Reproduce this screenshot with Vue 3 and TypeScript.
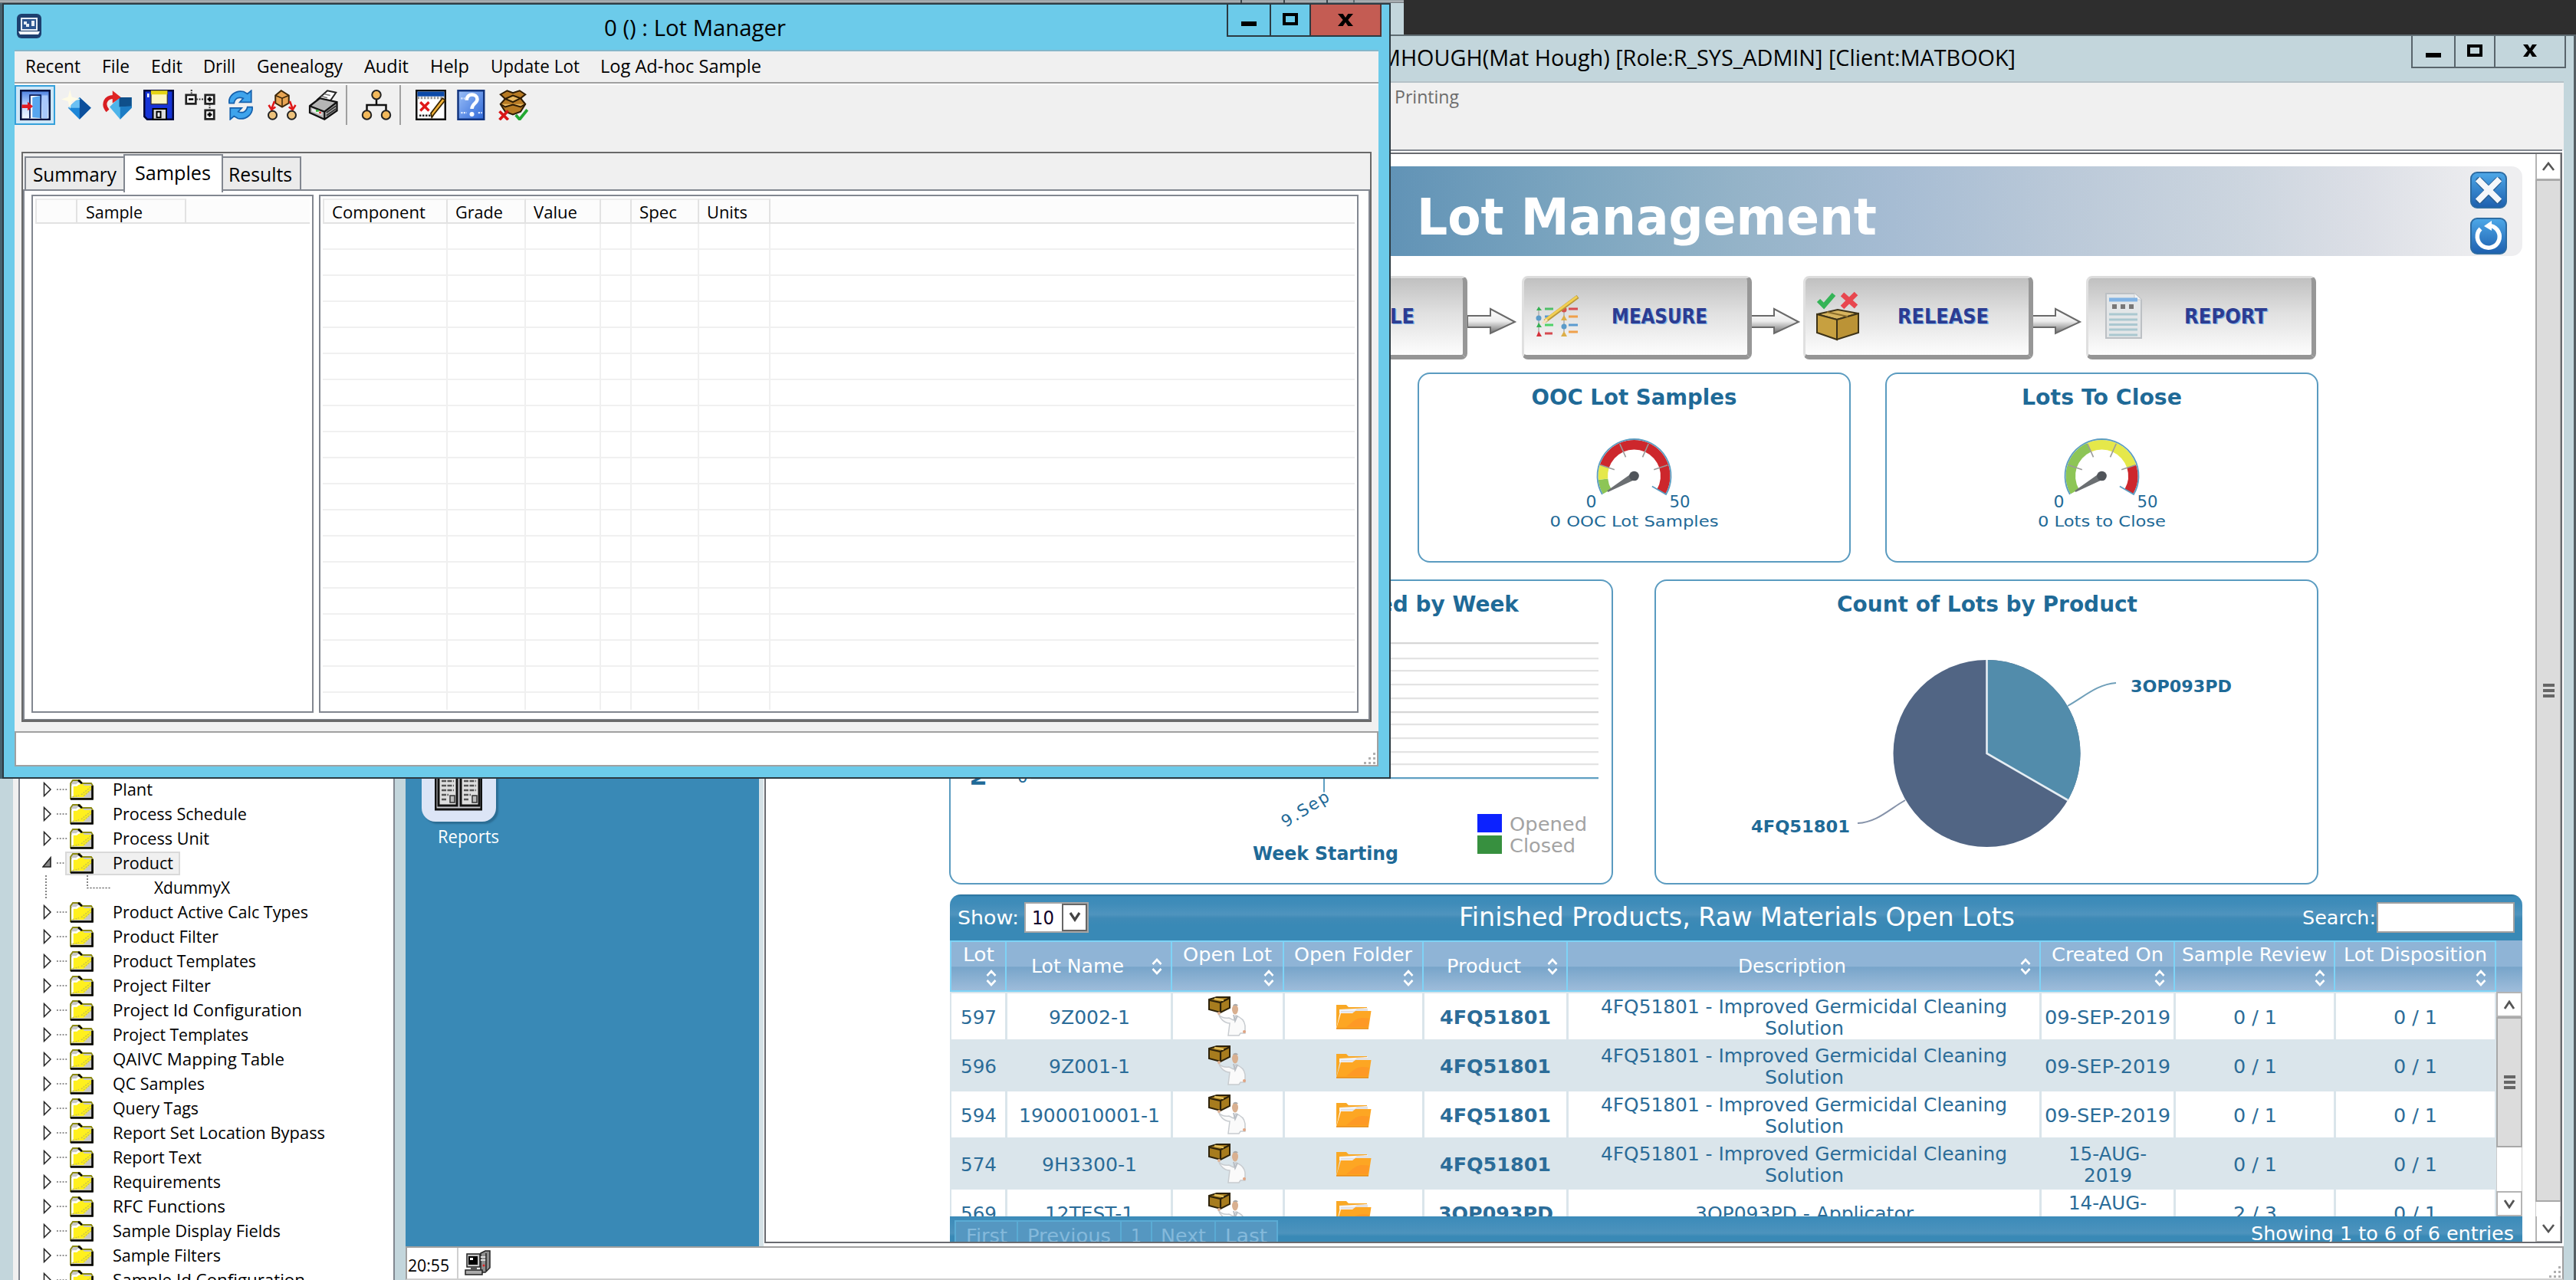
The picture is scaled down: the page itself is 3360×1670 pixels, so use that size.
<script setup lang="ts">
interface Sized { text: string; w: number }
interface MenuEntry extends Sized { slot: number }
interface TreeNode extends Sized { child?: boolean; open?: boolean }
interface LotRow {
  lot: string; name: string; nameW: number; product: string; productW: number
  desc: Sized[]; date: Sized[]; review: string; disposition: string
}

// Squeezes or stretches a label horizontally to the given width in pixels.
const vFit = {
  mounted(el: HTMLElement, binding: { value: number }) {
    const natural = el.getBoundingClientRect().width
    if (!natural) return
    el.style.transform = `scaleX(${binding.value / natural})`
    el.style.marginRight = `${binding.value - natural}px`
  },
}

const menu: MenuEntry[] = [
  { text: 'Recent', w: 72, slot: 100 },
  { text: 'File', w: 36, slot: 64 },
  { text: 'Edit', w: 41, slot: 68 },
  { text: 'Drill', w: 42, slot: 70 },
  { text: 'Genealogy', w: 112, slot: 140 },
  { text: 'Audit', w: 58, slot: 86 },
  { text: 'Help', w: 51, slot: 79 },
  { text: 'Update Lot', w: 116, slot: 143 },
  { text: 'Log Ad-hoc Sample', w: 210, slot: 220 },
]

const columns = [
  { text: 'Component', w: 122, slot: 161 },
  { text: 'Grade', w: 62, slot: 102 },
  { text: 'Value', w: 57, slot: 98 },
  { text: '', w: 0, slot: 40 },
  { text: 'Spec', w: 49, slot: 88 },
  { text: 'Units', w: 53, slot: 93 },
]

const tree: TreeNode[] = [
  { text: 'Plant', w: 52 },
  { text: 'Process Schedule', w: 175 },
  { text: 'Process Unit', w: 126 },
  { text: 'Product', w: 79, open: true },
  { text: 'XdummyX', w: 99, child: true },
  { text: 'Product Active Calc Types', w: 255 },
  { text: 'Product Filter', w: 138 },
  { text: 'Product Templates', w: 187 },
  { text: 'Project Filter', w: 128 },
  { text: 'Project Id Configuration', w: 247 },
  { text: 'Project Templates', w: 177 },
  { text: 'QAIVC Mapping Table', w: 224 },
  { text: 'QC Samples', w: 120 },
  { text: 'Query Tags', w: 112 },
  { text: 'Report Set Location Bypass', w: 277 },
  { text: 'Report Text', w: 116 },
  { text: 'Requirements', w: 141 },
  { text: 'RFC Functions', w: 147 },
  { text: 'Sample Display Fields', w: 219 },
  { text: 'Sample Filters', w: 141 },
  { text: 'Sample Id Configuration', w: 251 },
]

const heads = [
  { text: 'Lot', w: 41, tall: true },
  { text: 'Lot Name', w: 121, tall: false },
  { text: 'Open Lot', w: 116, tall: true },
  { text: 'Open Folder', w: 154, tall: true },
  { text: 'Product', w: 97, tall: false },
  { text: 'Description', w: 141, tall: false },
  { text: 'Created On', w: 146, tall: true },
  { text: 'Sample Review', w: 189, tall: true },
  { text: 'Lot Disposition', w: 187, tall: true },
]

const germ: Sized[] = [
  { text: '4FQ51801 - Improved Germicidal Cleaning', w: 530 },
  { text: 'Solution', w: 103 },
]
const sep: Sized[] = [{ text: '09-SEP-2019', w: 164 }]
const rows: LotRow[] = [
  { lot: '597', name: '9Z002-1', nameW: 106, product: '4FQ51801', productW: 145, desc: germ, date: sep, review: '0 / 1', disposition: '0 / 1' },
  { lot: '596', name: '9Z001-1', nameW: 106, product: '4FQ51801', productW: 145, desc: germ, date: sep, review: '0 / 1', disposition: '0 / 1' },
  { lot: '594', name: '1900010001-1', nameW: 184, product: '4FQ51801', productW: 145, desc: germ, date: sep, review: '0 / 1', disposition: '0 / 1' },
  { lot: '574', name: '9H3300-1', nameW: 124, product: '4FQ51801', productW: 145, desc: germ, date: [{ text: '15-AUG-', w: 102 }, { text: '2019', w: 63 }], review: '0 / 1', disposition: '0 / 1' },
  { lot: '569', name: '12TEST-1', nameW: 116, product: '3OP093PD', productW: 150, desc: [{ text: '3OP093PD - Applicator', w: 285 }], date: [{ text: '14-AUG-', w: 102 }, { text: '2019', w: 63 }], review: '2 / 3', disposition: '0 / 1' },
]

const pager = [
  { text: 'First', w: 54, slot: 81 },
  { text: 'Previous', w: 109, slot: 135 },
  { text: '1', w: 14, slot: 40 },
  { text: 'Next', w: 59, slot: 83 },
  { text: 'Last', w: 55, slot: 81 },
]

const gridLines = [838, 858, 874, 892, 910, 928, 944, 962, 980, 996]

// Gauges sweep 240 degrees, starting 30 degrees below the horizontal on the left.
const point = (cx: number, cy: number, r: number, deg: number): string => {
  const a = ((150 + deg) * Math.PI) / 180
  return `${(cx + r * Math.cos(a)).toFixed(2)} ${(cy + r * Math.sin(a)).toFixed(2)}`
}
const band = (cx: number, cy: number, from: number, to: number): string => {
  const large = to - from > 180 ? 1 : 0
  return `M${point(cx, cy, 47, from)}A47 47 0 ${large} 1 ${point(cx, cy, 47, to)}L${point(cx, cy, 34.5, to)}A34.5 34.5 0 ${large} 0 ${point(cx, cy, 34.5, from)}Z`
}
const gauges = [
  { id: 'ooc', view: '1849 486 565 248', title: 'OOC Lot Samples', titleW: 268, cx: 2131.5, caption: '0 OOC Lot Samples', captionW: 220, green: 24, yellow: 48 },
  { id: 'close', view: '2459 486 565 248', title: 'Lots To Close', titleW: 209, cx: 2741.5, caption: '0 Lots to Close', captionW: 167, green: 96, yellow: 192 },
]
const GY = 621
</script>

<template>
  <div class="desktop">
    <!-- window peeking out at the very top -->
    <div class="peek"><i class="p1" /><i class="p2" /><i class="p3" /></div>

    <!-- main application window -->
    <section class="main-win">
      <header class="main-title">
        <span class="caption"><span v-fit="828" class="t seg f29">MHOUGH(Mat Hough) [Role:R_SYS_ADMIN] [Client:MATBOOK]</span></span>
        <div class="win-btns pale">
          <span class="wb a"><i class="g-min" /></span><span class="wb b"><i class="g-max" /></span>
          <span class="wb c"><svg width="18" height="16" viewBox="0 0 18 16"><path d="M0 0h6l3 5 3-5h6l-6 8 6 8h-6l-3-5-3 5H0l6-8z" /></svg></span>
        </div>
      </header>
      <div class="main-menu"><span v-fit="84" class="t seg f24">Printing</span></div>
      <div class="main-body">
        <aside class="tree">
          <div v-for="n in tree" :key="n.text" class="node" :class="{ child: n.child, open: n.open }">
            <svg v-if="!n.child" class="twist" width="34" height="32" viewBox="0 0 34 32">
              <path v-if="!n.open" d="M2.5 7.5v17L11 16z" fill="#fff" stroke="#222" stroke-width="1.5" />
              <path v-else d="M11 9v12H1z" fill="#888" stroke="#222" stroke-width="1.6" />
              <path d="M19 16h15" stroke="#666" stroke-width="1.6" stroke-dasharray="1.8 2" />
            </svg>
            <svg v-else class="elbow" width="90" height="32" viewBox="0 0 90 32">
              <path d="M5 0v32M59 0v16.500h30" fill="none" stroke="#666" stroke-width="1.6" stroke-dasharray="2 2" />
            </svg>
            <span class="node-box">
              <svg v-if="!n.child" class="folder" width="32" height="28" viewBox="0 0 32 28">
                <path d="M2 26V6l3-4h9l3 4h12l2 3v17z" fill="#c8c8c8" stroke="#8b8a12" stroke-width="1.8" />
                <path d="M4 24V10h4V7h10l2 2h9v5L19 24z" fill="#fff01e" />
                <path d="M4 8.500h6l2-2h2M4.500 23V9" stroke="#fff" stroke-width="2.500" fill="none" />
                <path d="M5 23.500c3 0 6-1 8-2M16 21l12-10M19 22l10-8" stroke="#c9c44a" stroke-width="1.600" stroke-dasharray="2 1.500" fill="none" />
                <path d="M2 26.500h28.500V9M12 2l5 4" stroke="#000" stroke-width="2.600" fill="none" />
              </svg>
              <span v-fit="n.w" class="t seg f21">{{ n.text }}</span>
            </span>
          </div>
        </aside>
        <div class="split" />
        <div class="right">
          <div class="upper">
            <nav class="nav">
              <div class="tile">
                <svg width="62" height="70" viewBox="0 0 62 70">
                  <path d="M1 0h60v68H1z" fill="#c9c9cf" stroke="#111" stroke-width="3" />
                  <g v-for="x in [5, 34]" :key="x" :transform="`translate(${x} 0)`">
                    <path d="M0 -5h24v68H0z" fill="#dedede" stroke="#111" stroke-width="3" />
                    <path d="M4 20h4" stroke="#0b4bd8" stroke-width="5" />
                    <path d="M10 21h10" stroke="#1f74ff" stroke-width="3" stroke-dasharray="2.500 1.500" />
                    <path d="M4 31h16M4 37h16M4 43h16M4 49h9M4 55h7" stroke="#555" stroke-width="2.600" stroke-dasharray="6 1.500" />
                    <path d="M15 50h6v9h-6z" fill="#bbb" stroke="#333" stroke-width="1.500" />
                  </g>
                </svg>
              </div>
              <span v-fit="80" class="t seg f23 white">Reports</span>
            </nav>
            <div class="gutter" />
            <div class="frame">
              <div class="page">
                <div class="banner">
                  <span v-fit="600" class="t dj h1">Lot Management</span>
                  <div class="banner-btns">
                    <svg width="48" height="48" viewBox="0 0 48 48">
                      <defs><linearGradient id="bb" x1="0" y1="0" x2="0" y2="1"><stop offset="0" stop-color="#4ea8e8" /><stop offset="1" stop-color="#1d5fae" /></linearGradient></defs>
                      <rect x="1" y="1" width="46" height="46" rx="8" fill="url(#bb)" stroke="#2d6ca3" stroke-width="2" />
                      <path d="M12 12l24 25M36 12L12 37" stroke="#2a5f94" stroke-width="10" stroke-linecap="round" />
                      <path d="M12.500 12.500l23 23M35.500 12.500l-23 23" stroke="#f4f7fb" stroke-width="8" stroke-linecap="square" />
                    </svg>
                    <svg width="48" height="48" viewBox="0 0 48 48">
                      <rect x="1" y="1" width="46" height="46" rx="8" fill="url(#bb)" stroke="#2d6ca3" stroke-width="2" />
                      <path d="M13.500 14.500A14.500 14.500 0 1 0 27 10.600" fill="none" stroke="#fff" stroke-width="5.500" />
                      <path d="M28 4v13l-10-6z" fill="#fff" />
                    </svg>
                  </div>
                </div>

                <div class="flow">
                  <div class="step"><span v-fit="110" class="t dj step-l s0">SAMPLE</span></div>
                  <svg class="arrow" width="71" height="40" viewBox="-1 0 71 40"><defs><linearGradient id="ar" x1="0" y1="0" x2="0" y2="1"><stop offset="0" stop-color="#fff" /><stop offset=".5" stop-color="#ececec" /><stop offset="1" stop-color="#6c6c6c" /></linearGradient></defs><path d="M-1 13h30V4l32 17-32 15v-8H-1z" fill="url(#ar)" stroke="#6a6a6a" stroke-width="2" /></svg>
                  <div class="step">
                    <svg class="ico" width="62" height="62" viewBox="0 0 62 62">
                      <path d="M15 21h11" stroke="#4fbf68" stroke-width="3" /><path d="M46 21h12M15 53h10" stroke="#d64a50" stroke-width="3" /><path d="M15 31h8M46 42h12" stroke="#5b9bd0" stroke-width="3" /><path d="M46 31h12M46 51h12" stroke="#efa04b" stroke-width="3" /><path d="M15 42h11" stroke="#4fd268" stroke-width="3" />
                      <path d="M7 21v30M40 21v30" stroke="#bbb" stroke-width="2" />
                      <path d="M4 23l3-5 4 5zM4 45l3-6 4 6z" fill="#36b052" /><circle cx="7" cy="33" r="3.500" fill="#5b9bc9" /><path d="M4 57l3-7 4 7z" fill="#d5313b" /><circle cx="40" cy="22" r="3.500" fill="#d5514b" /><path d="M36 36l4-7 4 7zM36 57l4-7 4 7z" fill="#dcae48" /><circle cx="40" cy="44" r="3.500" fill="#5b9bc9" />
                      <path d="M15 37L58 5" stroke="#b8973a" stroke-width="5" /><path d="M15 36L57 5" stroke="#f2cf52" stroke-width="3" /><path d="M12 40l6-5" stroke="#f5dfc0" stroke-width="3" />
                    </svg>
                    <span v-fit="125" class="t dj step-l s1">MEASURE</span>
                  </div>
                  <svg class="arrow" width="67" height="40" viewBox="0 0 67 40"><path d="M-1 13h30V4l32 17-32 15v-8H-1z" fill="url(#ar)" stroke="#6a6a6a" stroke-width="2" /></svg>
                  <div class="step">
                    <svg class="ico" width="62" height="66" viewBox="0 0 62 66">
                      <path d="M5 12l7 7L25 4" fill="none" stroke="#35b457" stroke-width="6" /><path d="M36 4l18 16M54 3L36 21" stroke="#e8474f" stroke-width="6.500" />
                      <path d="M3 30l27-6 27 5-28 8z" fill="#d7b45f" stroke="#3d3217" stroke-width="2" /><path d="M3 30l26 7v26L3 54z" fill="#c7a040" stroke="#3d3217" stroke-width="2" /><path d="M29 37l28-8v25L29 63z" fill="#bb9336" stroke="#3d3217" stroke-width="2" /><path d="M16 27l27 6" stroke="#8a6c2a" stroke-width="2" />
                    </svg>
                    <span v-fit="119" class="t dj step-l s2">RELEASE</span>
                  </div>
                  <svg class="arrow" width="69" height="40" viewBox="0 0 69 40"><path d="M-1 13h30V4l32 17-32 15v-8H-1z" fill="url(#ar)" stroke="#6a6a6a" stroke-width="2" /></svg>
                  <div class="step">
                    <svg class="ico r" width="52" height="64" viewBox="0 0 52 64">
                      <path d="M3 2h37l9 8v50H3z" fill="#e3e6e8" stroke="#bcc0c4" stroke-width="2" /><path d="M40 2v8h9" fill="#f6f6f6" stroke="#c6c9cc" />
                      <path d="M7 10h37" stroke="#81b3e4" stroke-width="5" /><path d="M11 19h29" stroke="#777" stroke-width="6" stroke-dasharray="6 5" /><path d="M7 29h37M7 36h37M7 42.500h37M7 49h37M7 56h37" stroke="#abc8d0" stroke-width="3" />
                    </svg>
                    <span v-fit="108" class="t dj step-l s3">REPORT</span>
                  </div>
                </div>

                <div class="cards one">
                  <div v-for="g in gauges" :key="g.id" class="card">
                    <svg width="565" height="248" :viewBox="g.view">
                      <text class="ct" :x="g.cx" y="528" text-anchor="middle" :textLength="g.titleW" lengthAdjust="spacingAndGlyphs">{{ g.title }}</text>
                      <path :d="band(g.cx, GY, 0, g.green)" fill="#8dc556" />
                      <path :d="band(g.cx, GY, g.green, g.yellow)" fill="#e5e84a" />
                      <path :d="band(g.cx, GY, g.yellow, 240)" fill="#cd272c" />
                      <path :d="`M${point(g.cx, GY, 48, 0)}A48 48 0 1 1 ${point(g.cx, GY, 48, 240)}L${point(g.cx, GY, 27, 240)}`" fill="none" stroke="#5b9cc0" stroke-width="1.800" />
                      <path v-for="d in [48, 96, 144, 192]" :key="d" :d="`M${point(g.cx, GY, 46, d)}L${point(g.cx, GY, 27, d)}`" stroke="#9a9a9a" stroke-width="1.600" />
                      <path :d="`M${point(g.cx, GY, 40, 0)}L${point(g.cx, GY, 4, -60)}L${point(g.cx, GY, 4, 60)}Z`" fill="#6b6f72" stroke="#6b6f72" stroke-width="2" />
                      <circle :cx="g.cx" :cy="GY" r="6.300" fill="#50545a" />
                      <text class="gl" :x="g.cx - 63" y="662" textLength="14" lengthAdjust="spacingAndGlyphs">0</text>
                      <text class="gl" :x="g.cx + 46" y="662" textLength="27" lengthAdjust="spacingAndGlyphs">50</text>
                      <text class="gc" :x="g.cx" y="687" text-anchor="middle" :textLength="g.captionW" lengthAdjust="spacingAndGlyphs">{{ g.caption }}</text>
                    </svg>
                  </div>
                </div>

                <div class="cards two">
                  <div class="card">
                    <svg width="866" height="398" viewBox="1238 756 866 398">
                      <text class="ct" x="1981" y="798" text-anchor="end">Lots Opened and Closed by Week</text>
                      <path v-for="(y, i) in gridLines" :key="y" :d="`M1345 ${y}h740v2.200H1345z`" :fill="i % 5 === 0 ? '#d6d6d6' : '#e3e3e3'" />
                      <path d="M1345 1014h740v2.200H1345z" fill="#5f9fc2" /><path d="M1727 1015v18.500" stroke="#5f9fc2" stroke-width="2" />
                      <text class="gl" x="1327" y="1021">0</text>
                      <text class="wb24" transform="translate(1285 1026) rotate(-90)">Number of Lots</text>
                      <text class="gl" transform="translate(1677 1080) rotate(-32)" textLength="69">9.Sep</text>
                      <text class="wb24" x="1634" y="1122" textLength="190" lengthAdjust="spacingAndGlyphs">Week Starting</text>
                      <path d="M1927 1062h32v24h-32z" fill="#0c22ff" /><path d="M1927 1090h32v24h-32z" fill="#37903f" />
                      <text class="lg" x="1969" y="1084" textLength="101" lengthAdjust="spacingAndGlyphs">Opened</text>
                      <text class="lg" x="1969" y="1112" textLength="86" lengthAdjust="spacingAndGlyphs">Closed</text>
                    </svg>
                  </div>
                  <div class="card">
                    <svg width="866" height="398" viewBox="2158 756 866 398">
                      <text class="ct" x="2592" y="798" text-anchor="middle" textLength="392" lengthAdjust="spacingAndGlyphs">Count of Lots by Product</text>
                      <circle cx="2591.500" cy="983" r="122" fill="#516584" />
                      <path d="M2591.500 983V861A122 122 0 0 1 2697.200 1044z" fill="#528cab" />
                      <path d="M2591.500 861v122l105.700 61" fill="none" stroke="#e6eef4" stroke-width="2.600" />
                      <path d="M2697 921C2720 908 2735 893 2760 891" fill="none" stroke="#6f9fb9" stroke-width="2" />
                      <path d="M2485 1044C2464 1056 2448 1073 2423 1074" fill="none" stroke="#8592a9" stroke-width="2" />
                      <text class="pl" x="2779" y="903" textLength="132" lengthAdjust="spacingAndGlyphs">3OP093PD</text>
                      <text class="pl" x="2284" y="1086" textLength="129" lengthAdjust="spacingAndGlyphs">4FQ51801</text>
                    </svg>
                  </div>
                </div>

                <div class="lots">
                  <div class="lots-bar">
                    <span v-fit="80" class="t dj f25">Show:</span>
                    <span class="select"><span v-fit="29" class="t dj f25 ten">10</span><span class="drop"><svg width="16" height="14" viewBox="0 0 16 14"><path d="M2 1l6 9 6-9" fill="none" stroke="#444" stroke-width="3.200" /></svg></span></span>
                    <span class="lots-title"><span v-fit="725" class="t dj f33">Finished Products, Raw Materials Open Lots</span></span>
                    <span v-fit="96" class="t dj f25">Search:</span>
                    <span class="search" />
                  </div>
                  <div class="grid head">
                    <div v-for="h in heads" :key="h.text" class="th" :class="{ tall: h.tall }">
                      <span class="th-l"><span v-fit="h.w" class="t dj f24">{{ h.text }}</span></span>
                      <svg class="sort" width="14" height="22" viewBox="0 0 14 22"><path d="M1.500 8L7 2l5.500 6M1.500 14L7 20l5.500-6" fill="none" stroke="#fff" stroke-width="2.600" /></svg>
                    </div>
                    <div class="th end" />
                  </div>
                  <div class="body">
                    <div class="rows">
                      <div v-for="(r, i) in rows" :key="r.lot" class="grid row" :class="{ alt: i % 2 === 1 }">
                        <div class="td"><span v-fit="47" class="t dj f25">{{ r.lot }}</span></div>
                        <div class="td"><span v-fit="r.nameW" class="t dj f25">{{ r.name }}</span></div>
                        <div class="td pic">
                          <svg width="52" height="52" viewBox="0 0 52 52">
                            <path d="M1 4l10-3h17v14l-12 6-15-4z" fill="#a77c1e" stroke="#2d220a" stroke-width="2" /><path d="M2 5l14 3 12-6M16 8v13" stroke="#2d220a" stroke-width="2.200" fill="none" /><path d="M8 3l12 2" stroke="#e2c05e" stroke-width="2.500" />
                            <path d="M13 22c2 5 8 7 14 6l6 3 3-6c6 2 11 6 12 13l0 10h-6l-2 3H26l2-16c-7 0-13-6-15-13z" fill="#fafafa" stroke="#c8ccd0" stroke-width="1.500" />
                            <ellipse cx="35" cy="17" rx="4" ry="6.500" fill="#d9b090" /><path d="M32 12c2-3 5-3 7 0z" fill="#aaa" /><path d="M33 24l2 8 3-7" stroke="#b9bec4" stroke-width="2" fill="none" /><circle cx="14" cy="22" r="2" fill="#e0b598" /><circle cx="47" cy="46" r="2" fill="#e0a584" />
                          </svg>
                        </div>
                        <div class="td pic">
                          <svg width="48" height="34" viewBox="0 0 48 34">
                            <path d="M1 33V2h13l3 3h24v6H6z" fill="#f9a825" /><path d="M5 8l37-2v7H5z" fill="#f3f3f5" /><path d="M7 10h18l3-3h14v5H7z" fill="#e1e1e6" />
                            <path d="M7 13h15l4-3h20.500L43 33H1z" fill="#fda623" /><path d="M20 26c8-8 16-8 24-6l-2 11H14z" fill="#fd9426" opacity=".7" /><path d="M1 33h42" stroke="#e98a10" stroke-width="1.500" />
                          </svg>
                        </div>
                        <div class="td"><b v-fit="r.productW" class="t dj f25">{{ r.product }}</b></div>
                        <div class="td"><span v-for="d in r.desc" :key="d.text" v-fit="d.w" class="t dj f25">{{ d.text }}</span></div>
                        <div class="td"><span v-for="d in r.date" :key="d.text" v-fit="d.w" class="t dj f25">{{ d.text }}</span></div>
                        <div class="td"><span v-fit="57" class="t dj f25">{{ r.review }}</span></div>
                        <div class="td"><span v-fit="57" class="t dj f25">{{ r.disposition }}</span></div>
                      </div>
                    </div>
                    <div class="sbar in">
                      <span class="sb up"><svg width="16" height="12" viewBox="0 0 16 12"><path d="M2 11l6-9 6 9" fill="none" stroke="#555" stroke-width="2.800" /></svg></span>
                      <span class="thumb"><i /><i /><i /></span>
                      <span class="track" />
                      <span class="sb dn"><svg width="16" height="12" viewBox="0 0 16 12"><path d="M2 1l6 9 6-9" fill="none" stroke="#555" stroke-width="2.800" /></svg></span>
                    </div>
                  </div>
                  <div class="lots-foot">
                    <div class="pager">
                      <span v-for="p in pager" :key="p.text" :style="{ width: p.slot + 'px' }"><span v-fit="p.w" class="t dj f25">{{ p.text }}</span></span>
                    </div>
                    <span v-fit="343" class="t dj f25 showing">Showing 1 to 6 of 6 entries</span>
                  </div>
                </div>
              </div>
              <div class="sbar out">
                <span class="sb up"><svg width="18" height="12" viewBox="0 0 18 12"><path d="M2 11l7-9 7 9" fill="none" stroke="#555" stroke-width="2.600" /></svg></span>
                <span class="thumb"><i /><i /><i /></span>
                <span class="track" />
                <span class="sb dn"><svg width="18" height="12" viewBox="0 0 18 12"><path d="M2 1l7 9 7-9" fill="none" stroke="#555" stroke-width="2.600" /></svg></span>
              </div>
            </div>
          </div>
          <footer class="status">
            <span class="clock"><span v-fit="54" class="t seg f22">20:55</span></span>
            <svg class="pc" width="34" height="34" viewBox="0 0 34 34">
              <path d="M21 4l6-3h6v22l-6 6h-6z" fill="#8d8d8d" stroke="#222" stroke-width="1.500" /><path d="M21 9h7M21 13h7" stroke="#ddd" stroke-width="2" /><path d="M28 4v23" stroke="#222" stroke-width="1.500" /><circle cx="25" cy="20" r="1.500" fill="#d22" />
              <path d="M3 5h17v17H3z" fill="#c4c4c4" stroke="#222" stroke-width="1.500" /><path d="M5 8h12v11H5z" fill="#000" /><path d="M7 10h4v3H7z" fill="#fff" /><path d="M1 26h22v6H1z" fill="#aaa" stroke="#222" stroke-width="1.500" /><path d="M8 22h8v4H8z" fill="#555" />
            </svg>
            <svg class="grip" width="18" height="18" viewBox="0 0 18 18"><path d="M13 2h3v3h-3zM13 8h3v3h-3zM7 8h3v3H7zM1 14h3v3H1zM7 14h3v3H7zM13 14h3v3h-3z" fill="#b0b0b0" /></svg>
          </footer>
        </div>
      </div>
    </section>

    <!-- Lot Manager window -->
    <section class="lot-win">
      <header class="lot-title">
        <svg class="app-ico" width="32" height="32" viewBox="0 0 32 32"><rect width="32" height="32" rx="6" fill="#1d3f6e" /><rect x="6" y="6" width="20" height="15" fill="#2c5690" stroke="#e6edf5" stroke-width="2" /><path d="M9 10h4v3h3v4h-4v-3H9zM19 9h4v7h-4z" fill="#e6edf5" /><path d="M2 23h28l-2 4H4z" fill="#f2f5fa" /></svg>
        <span class="lt"><span v-fit="237" class="t seg f28">0 () : Lot Manager</span></span>
        <div class="win-btns blue">
          <span class="wb a"><i class="g-min" /></span><span class="wb b"><i class="g-max" /></span>
          <span class="wb c"><svg width="20" height="16" viewBox="0 0 18 16" preserveAspectRatio="none"><path d="M0 0h6l3 5 3-5h6l-6 8 6 8h-6l-3-5-3 5H0l6-8z" /></svg></span>
        </div>
      </header>
      <div class="client">
        <nav class="menubar"><span v-for="m in menu" :key="m.text" :style="{ width: m.slot + 'px' }"><span v-fit="m.w" class="t seg f24">{{ m.text }}</span></span></nav>
        <div class="tools">
          <span class="door">
            <svg width="40" height="40" viewBox="0 0 16 16">
              <defs><linearGradient id="dr" x1="0" y1="0" x2="0" y2="1"><stop offset="0" stop-color="#4b7fe0" /><stop offset=".5" stop-color="#bcd6ff" /><stop offset="1" stop-color="#f4f8ff" /></linearGradient></defs>
              <path d="M.5.500h15v15H.5z" fill="url(#dr)" stroke="#06123f" /><path d="M11.500 3v12h3V3z" fill="#a9c8fb" />
              <path d="M5.200 15V2.800h5.600V15" fill="#fff" stroke="#0a1c5a" stroke-width=".7" /><path d="M6.500 4L10.500 3.200v11.600l-4-.3z" fill="#58a6ee" /><path d="M1 7.800h3V6.300L6.800 8.700 4 11V9.600H1z" fill="#e01a22" />
            </svg>
          </span>
          <svg width="40" height="40" viewBox="0 0 16 16"><path d="M9.500 4l6 5.500-6 6-6-6z" fill="#1d86d8" /><path d="M9.500 4v11.500l6-6z" fill="#0c4f9c" /><path d="M9.500 4L3.500 9.500l6 0z" fill="#6cc1f4" /><path d="M4.500 0l1 3.800L10 5 5.500 6l-1 4-1-4L0 5l3.500-1.200z" fill="#fffbe6" /></svg>
          <svg width="40" height="40" viewBox="0 0 16 16"><path d="M4 9l5-5h6.500v5.500l-6 6z" fill="#4db4ea" /><path d="M9 4h6.500v5L9 9z" fill="#0f4f8a" /><path d="M9.500 15.500V9l6-.5v1z" fill="#1d7cc4" /><path d="M3 11C0 7.500 2 3.500 6.500 3.800" fill="none" stroke="#d91e22" stroke-width="2" /><path d="M5.500.500l4.300 3.400-4.300 3.200z" fill="#e02424" /></svg>
          <svg width="40" height="40" viewBox="0 0 16 16"><path d="M.5.500h15v15H2L.5 14z" fill="#1634d8" stroke="#02083a" /><path d="M4 .500h8.500V7.500H4z" fill="#fdf7c0" stroke="#333" stroke-width=".5" /><path d="M4 .500h8.500v2H4z" fill="#e5d415" /><path d="M5 10h7v5.500H5z" fill="#ddd" stroke="#000" stroke-width=".8" /><path d="M7 11.500h2v3H7z" fill="#fff" stroke="#000" stroke-width=".8" /><path d="M2 2h1v2H2z" fill="#fff" /></svg>
          <svg width="40" height="40" viewBox="0 0 16 16"><path d="M.7 2.700h5v4.600h-5zM10.700 2.700h4.600v4.600h-4.600zM10.700 10.700h4.600v4.600h-4.600z" fill="#fff" stroke="#222" stroke-width="1.100" /><path d="M2 5h2.500M11.800 5h2.400M13 3.800v2.400M11.800 13h2.400M13 11.800v2.400" stroke="#000" /><path d="M3.500 0v2M6 5h4.500M13 7.500v3" stroke="#333" stroke-width=".8" stroke-dasharray=".8 .6" /></svg>
          <svg width="40" height="40" viewBox="0 0 16 16"><path d="M2 7C1.500 3.500 5 0 9.500 1L11.500 2.200 13.500.5v6H7.500L9.300 4.500C7 3.500 5 4.500 4.500 7z" fill="#3fa4ec" stroke="#1661ad" stroke-width=".7" /><path d="M14 9c.5 3.500-3 7-7.500 6L4.500 13.800 2.500 15.500v-6H8.500L6.700 11.500c2.300 1 4.300 0 4.800-2.500z" fill="#3fa4ec" stroke="#1661ad" stroke-width=".7" /></svg>
          <svg width="40" height="40" viewBox="0 0 16 16"><path d="M4.500 3l3-2.500L11.500 3v4L8 9 4.500 7z" fill="#e8a552" stroke="#3c2708" stroke-width=".8" /><path d="M4.500 3L8 4.500 11.500 3M8 4.500V9" stroke="#3c2708" stroke-width=".6" fill="none" /><path d="M4 6L2.500 10M1 8l1.500 2.500L4.500 9M12 6l1.500 4M11.500 9l2 1.500L15 8" stroke="#e01818" fill="none" /><circle cx="3" cy="13.300" r="2.200" fill="#edc27c" stroke="#222" stroke-width=".8" /><circle cx="13" cy="13.300" r="2.200" fill="#edc27c" stroke="#222" stroke-width=".8" /></svg>
          <svg width="40" height="40" viewBox="0 0 16 16"><path d="M5 5l5-4.500 4.500 1L11 6.500z" fill="#fff" stroke="#222" stroke-width=".8" /><path d="M.8 8.500L6 4.500l9 2v4.500L8.500 15.500.8 12z" fill="#b5b5b5" stroke="#111" stroke-width=".9" /><path d="M.8 8.500l7.700 3 6.500-5M8.500 11.500v4" stroke="#111" stroke-width=".9" fill="none" /><path d="M9.500 12l5-3.500M9.500 13.500l5-3.500" stroke="#333" stroke-width=".8" /><path d="M2 9.800l5 2v1.500l-5-2z" fill="#eee" /><path d="M4 10.500h1.500v1H4z" fill="#2eb82e" /><path d="M5.700 11.500h1v1h-1z" fill="#d22" /><path d="M7 3.500l3 .8M8.500 2.300l3 .7" stroke="#777" stroke-width=".6" /></svg>
          <i class="vr" />
          <svg class="org" width="40" height="40" viewBox="0 0 16 16"><path d="M8 4.500V8M3 11V8h10v3" stroke="#111" fill="none" /><circle cx="8" cy="2.700" r="2.300" fill="#f2b95c" stroke="#222" stroke-width=".8" /><circle cx="3" cy="13.200" r="2.300" fill="#f2b95c" stroke="#222" stroke-width=".8" /><circle cx="13" cy="13.200" r="2.300" fill="#f2b95c" stroke="#222" stroke-width=".8" /></svg>
          <i class="vr b" />
          <svg class="org" width="40" height="40" viewBox="0 0 16 16"><path d="M.5.500h15v15H.5z" fill="#fff" stroke="#111" /><path d="M1 1h14v2.500H1z" fill="#0d4aa8" /><path d="M1 4.300h14" stroke="#999" stroke-width="1.200" stroke-dasharray="1 .7" /><path d="M2.500 6.500l4.500 4.500M7 6.500L2.500 11" stroke="#e01818" stroke-width="1.300" /><path d="M15.500 5.500L9.500 13l-1 1.500-.5-2.200L14 4.500z" fill="#f3b43a" stroke="#3a2600" stroke-width=".7" /><path d="M2 13.500h6" stroke="#222" stroke-dasharray="1 .6" /></svg>
          <svg width="40" height="40" viewBox="0 0 16 16"><defs><linearGradient id="hp" x1="0" y1="0" x2="1" y2="1"><stop offset="0" stop-color="#9cc0f8" /><stop offset="1" stop-color="#2f68d8" /></linearGradient></defs><path d="M1 .500h13.500v15H1z" fill="url(#hp)" stroke="#12347e" /><path d="M5.500 5.500C5.500 1.500 11 2 11 5c0 2.200-2.800 2.200-2.800 5" fill="none" stroke="#fff" stroke-width="1.800" /><circle cx="8.200" cy="12.800" r="1.200" fill="#fff" /><path d="M2.500 4.500h2M11.500 12h2M2.500 12h3" stroke="#dbe8ff" stroke-width=".9" stroke-dasharray=".9 .5" /></svg>
          <svg width="40" height="40" viewBox="0 0 16 16"><path d="M1.500 2.500L5 .500l3 1.200L11.500.500l3 2L12 4.500l2.500 3L12 11.500 8 13l-4-1.500-2.500-4L4 4.800z" fill="#b67a24" stroke="#2d1b04" stroke-width=".8" /><path d="M4 4.800L8 3l4 1.500L8 6.500zM1.500 7.500L4 9l4-1.200L12 9l2.500-1.500" fill="#e8b860" stroke="#2d1b04" stroke-width=".8" /><path d="M1 11.300l4.500 4.400M5.500 11L1 15.700" stroke="#d81616" stroke-width="1.500" /><path d="M9.500 13.200l2 2.300 4-5" stroke="#22a832" stroke-width="1.500" fill="none" /></svg>
        </div>
        <div class="panel">
          <div class="tabs">
            <span class="tab s"><span v-fit="109" class="t seg f26">Summary</span></span>
            <span class="tab on"><span v-fit="99" class="t seg f26">Samples</span></span>
            <span class="tab r"><span v-fit="83" class="t seg f26">Results</span></span>
          </div>
          <div class="tab-page">
            <div class="list left">
              <div class="lh"><span class="c0" /><span class="c1"><span v-fit="74" class="t seg f22">Sample</span></span></div>
            </div>
            <div class="list wide">
              <div class="lh"><span v-for="(c, i) in columns" :key="i" :style="{ width: c.slot + 'px' }"><span v-if="c.text" v-fit="c.w" class="t seg f22">{{ c.text }}</span></span></div>
              <div class="lines"><span v-for="(c, i) in columns" :key="i" :style="{ width: c.slot + 'px' }" /></div>
            </div>
          </div>
        </div>
        <div class="lot-status"><svg width="18" height="18" viewBox="0 0 18 18"><path d="M13 2h3v3h-3zM13 8h3v3h-3zM7 8h3v3H7zM1 14h3v3H1zM7 14h3v3H7zM13 14h3v3h-3z" fill="#b0b0b0" /></svg></div>
      </div>
    </section>
  </div>
</template>

<style>
body { background: #2e2e2e; overflow: hidden; }
</style>

<style scoped>
* { box-sizing: border-box; }
.desktop { position: relative; width: 3360px; height: 1670px; overflow: hidden; background: #2e2e2e; }
.t { display: inline-block; flex: none; white-space: nowrap; transform-origin: 0 50%; }
.seg { font-family: "Open Sans", "Noto Sans", sans-serif; }
.dj { font-family: "DejaVu Sans", sans-serif; }
.f21 { font-size: 21px; } .f22 { font-size: 22px; } .f23 { font-size: 23px; } .f24 { font-size: 24px; }
.f25 { font-size: 25px; } .f26 { font-size: 25.5px; } .f28 { font-size: 29px; } .f29 { font-size: 29.5px; } .f33 { font-size: 33px; }
.white { color: #fff; }

.peek { position: absolute; left: 0; top: 0; width: 1831px; height: 45px; background: linear-gradient(#8b9398 0 1px, #c8cdd0 1px 2px, #858b90 2px 4px, #c3d6dc 4px); display: flex; padding-left: 1618px; gap: 54px; }
.peek i { width: 2px; height: 5px; background: #3a444a; flex: none; }
.peek::after { content: ""; width: 2px; height: 45px; background: #5d6a70; margin-left: -21px; flex: none; }

/* main window */
.main-win { position: absolute; left: 0; top: 45px; width: 3360px; height: 1625px; background: #c3d6dc; border-top: 2px solid #5f6c72; border-right: 3px solid #555e63; display: flex; flex-direction: column; color: #000; }
.main-title { height: 59px; flex: none; display: flex; justify-content: space-between; }
.caption { width: 2629px; height: 55px; display: flex; justify-content: flex-end; align-items: center; }
.win-btns { display: flex; height: 42px; }
.wb { display: flex; align-items: center; justify-content: center; border: 2px solid #59656c; border-top: 0; border-left-width: 0; }
.wb.a { border-left-width: 2px; }
.pale { margin-right: 10px; }
.pale .a { width: 58px; } .pale .b { width: 52px; } .pale .c { width: 92px; }
.pale .wb svg { margin-top: -2px; }
.g-min { width: 20px; height: 6px; background: #000; margin-top: 10px; }
.g-max { width: 20px; height: 16px; border: 4px solid #000; margin-top: -2px; }
.main-menu { height: 90px; flex: none; margin: 0 13px 0 17px; background: #f0f0f0; border-top: 2px solid #b5c2c8; padding: 1px 0 0 1802px; color: #6d6d6d; line-height: 34px; }
.main-body { flex: 1; min-height: 0; margin: 0 13px 0 17px; display: flex; }

.tree { width: 498px; background: #fff; border-left: 7px solid #f0f0f0; border-right: 2px solid #828790; padding-top: 818px; overflow: hidden; box-shadow: inset 2px 0 #828790; }
.node { height: 32px; display: flex; align-items: center; padding-left: 31px; line-height: 30px; }
.node-box { display: flex; align-items: center; height: 31px; padding-right: 7px; margin-left: -4px; padding-left: 3px; border: 2px solid transparent; }
.open .node-box { background: #f0f0f0; border-color: #d9d9d9; }
.folder { margin-right: 25px; flex: none; }
.twist, .elbow { flex: none; }
.child .node-box { margin-left: 51px; }
.split { width: 14px; background: #c3d6dc; }
.right { flex: 1; display: flex; flex-direction: column; min-width: 0; background: #fff; }
.upper { height: 1430px; flex: none; display: flex; }
.nav { width: 461px; background: #3989b6; padding-top: 780px; }
.tile { width: 97px; height: 96px; margin-left: 21px; background: #dce5f6; border-radius: 18px; padding: 12px 0 0 17px; box-shadow: 3px 3px 2px #2b6d94; overflow: hidden; }
.nav > .t { margin: 2px 0 0 42px; line-height: 34px; }
.gutter { width: 7px; background: #d5e2e7; border-right: 1px solid #fff; }
.frame { width: 2345px; border: 2px solid #696b70; margin-top: 3px; height: 1423px; display: flex; background: #fff; overflow: hidden; box-shadow: 0 -2px #fff, 0 -4px #828790; }
.page { width: 2308px; flex: none; padding: 16px 0 0 240px; overflow: hidden; }

.banner { width: 2051px; height: 117px; border-radius: 14px; display: flex; justify-content: space-between; align-items: center; background: linear-gradient(90deg, #4483ae 0, #6193b6 28%, #7da6c0 40%, #94b3c8 50%, #a6bcd3 60%, #b9c8d8 70%, #ccd5df 82%, #dcdfe6 90%, #eeeef0 98%); padding-right: 20px; }
.h1 { margin-left: 609px; font-size: 65px; font-weight: bold; color: #fff; line-height: 117px; padding-top: 15px; }
.banner-btns { display: flex; flex-direction: column; gap: 12px; padding-top: 4px; }

.flow { display: flex; align-items: center; padding: 25px 0 0 375px; height: 135px; }
.step { width: 300px; height: 109px; flex: none; display: flex; align-items: center; border-radius: 8px; border: solid; border-width: 3px 6px 6px 3px; border-color: #dcdcdc #979797 #959595 #e0e0e0; background: linear-gradient(#c0c0c0, #e0e0e0 45%, #fdfdfd); }
.arrow { flex: none; margin-top: 9px; }
.ico { flex: none; margin-left: 12px; }
.ico.r { margin-left: 20px; margin-right: 10px; }
.step-l { font-weight: bold; font-size: 27px; color: #2c3c91; text-shadow: 1.500px 1px 0 #7fb2e6; }
.s0 { margin-left: 118px; } .s1 { margin-left: 40px; } .s2 { margin-left: 46px; } .s3 { margin-left: 43px; }

.cards { display: flex; }
.card { border-radius: 16px; box-shadow: inset 0 0 0 2px #5a9bc0; background: #fff; display: flex; }
.one { gap: 45px; padding: 17px 0 0 610px; }
.two { gap: 54px; padding-top: 22px; margin-left: -1px; }
.card text { font-family: "DejaVu Sans", sans-serif; fill: #1f6a97; }
.card .ct { font-size: 28px; font-weight: bold; }
.card .gl { font-size: 21.500px; } .card .gc { font-size: 19.500px; }
.card .wb24 { font-size: 24px; font-weight: bold; }
.card .lg { font-size: 24.500px; fill: #a3a3a3; }
.card .pl { font-size: 20.500px; font-weight: bold; }

.lots { width: 2051px; margin-top: 13px; color: #2b6c98; }
.lots-bar { height: 60px; border-radius: 14px 14px 0 0; display: flex; align-items: center; padding: 0 10px; color: #fff; background: linear-gradient(#256c96 0, #3b8bb9 3px, #3f8cb9 12px, #4f94be 26px, #3f8ab6 31px, #3989b6 40px); }
.select { width: 84px; height: 40px; margin-left: 7px; background: #fff; border: 2px solid #a6a6a6; display: flex; align-items: center; color: #10002a; flex: none; }
.ten { margin-left: 8px; }
.drop { width: 33px; height: 36px; margin-left: auto; border: 2px solid #666; display: flex; align-items: center; justify-content: center; }
.lots-title { flex: 1; padding-left: 483px; display: flex; line-height: 60px; }
.search { width: 180px; height: 40px; background: #fff; border: 2px solid #a0a0a0; margin-left: 1px; }
.grid { display: grid; grid-template-columns: 74px 216px 146px 182px 188px 617px 175px 209px 210px 34px; }
.head { height: 67px; background: linear-gradient(#8fb4d6 0 50%, #78a5ca 52%, #9fbddb); }
.th { border: 2px solid #7ed3f6; border-left: 0; display: flex; align-items: center; color: #fff; min-width: 0; }
.th:first-child { border-left: 2px solid #7ed3f6; }
.th.end { border: 0; }
.th-l { flex: 1; display: flex; justify-content: center; line-height: 30px; }
.sort { margin: 0 11px 0 5px; flex: none; }
.tall.th { flex-direction: column; align-items: stretch; }
.tall .th-l { flex: none; height: 30px; margin: 2px -4px 0; }
.tall .sort { align-self: flex-end; margin-top: 4px; }
.body { height: 293px; display: flex; background: #fff; }
.rows { width: 2017px; height: 293px; overflow: hidden; background: #dae5eb; }
.row { height: 64px; }
.row.grid { grid-template-columns: 74px 216px 146px 182px 188px 617px 175px 209px 210px; }
.td { display: flex; flex-direction: column; align-items: center; justify-content: center; line-height: 28px; background: #fff; margin: 2px 2px 2px 1px; padding-top: 4px; }
.td:first-child { margin-left: 2px; }
.alt .td { background: #dae5eb; }
.pic { padding-top: 0; }
.pic svg { flex: none; }
.lots-foot { height: 40px; background: linear-gradient(#3b8bb9, #4d93bd 22px, #3989b6 26px); display: flex; justify-content: space-between; padding: 5px 11px 0 6px; }
.pager { display: flex; height: 44px; border-left: 2px solid #5aabd4; flex: none; }
.pager > span { border: 2px solid #5aabd4; border-left: 0; background: #5597c1; color: #84b9db; display: flex; justify-content: center; line-height: 38px; }
.showing { color: #fff; line-height: 35px; }

.sbar { display: flex; flex-direction: column; background: #fff; }
.sb { display: flex; align-items: center; justify-content: center; border: 2px solid #b4b4b4; background: #fff; flex: none; }
.thumb { background: #dcdcdc; border: 2px solid #a8a8a8; flex: none; display: flex; flex-direction: column; align-items: center; justify-content: center; gap: 3px; }
.thumb i { width: 15px; height: 4px; background: #666; }
.track { flex: 1; border-left: 1px solid #ccc; border-right: 1px solid #ccc; }
.in { width: 34px; } .in .sb { height: 33px; } .in .thumb { height: 170px; }
.out { width: 34px; } .out .sb { height: 33px; border-width: 0 1px 1px 2px; } .out .thumb { height: 1334px; border-right-width: 1px; }

.status { height: 45px; border: 2px solid #a0a0a0; border-bottom-color: #d0d0d0; background: #fff; display: flex; align-items: center; }
.clock { width: 67px; padding-left: 1px; height: 40px; line-height: 44px; border-right: 2px solid #d0d0d0; display: flex; }
.pc { margin-left: 8px; }
.grip { margin-left: auto; align-self: flex-end; }

/* Lot Manager */
.lot-win { position: absolute; left: 3px; top: 4px; width: 1811px; height: 1012px; background: #6ccbea; border: 2px solid #2b3a42; display: flex; flex-direction: column; padding: 0 14px 14px; box-shadow: -3px 0 #47626e; color: #000; }
.lot-title { height: 59px; flex: none; display: flex; }
.app-ico { margin: 12px 0 0 3px; flex: none; }
.lt { flex: 1; padding-left: 734px; line-height: 59px; display: flex; }
.blue { margin-right: -4px; }
.blue .wb { border-color: #2b3a42; }
.blue .a { width: 58px; } .blue .b { width: 52px; } .blue .c { width: 92px; background: #c45c53; border-right-color: #5d3531; }
.client { flex: 1; min-height: 0; display: flex; flex-direction: column; background: #f0f0f0; border-top: 2px solid #84b7ca; }
.menubar { height: 42px; flex: none; display: flex; padding-left: 14px; line-height: 38px; border-bottom: 2px solid #a0a0a0; }
.menubar > span { flex: none; display: flex; }
.tools { height: 89px; flex: none; border-top: 2px solid #fff; display: flex; gap: 13.700px; align-items: flex-start; }
.tools > svg { margin-top: 6px; flex: none; }
.door { width: 53px; height: 52px; border: 2px solid #35a0da; background: #cde6f7; display: flex; align-items: center; justify-content: center; margin-right: -6px; flex: none; }
.vr { width: 2px; height: 52px; background: #a0a0a0; margin-left: -5px; margin-right: 5px; }
.vr.b { margin-left: -4px; }
.panel { margin: 0 9px; height: 744px; flex: none; border: 2px solid #696969; border-bottom-width: 3px; display: flex; flex-direction: column; }
.tabs { height: 47px; flex: none; display: flex; align-items: flex-end; padding-left: 2px; }
.tab { border: 2px solid #828790; border-bottom: 0; background: #ebebeb; height: 43px; line-height: 42px; display: flex; justify-content: center; }
.tab.s { width: 129px; border-right: 0; } .tab.r { width: 102px; border-left: 0; padding-right: 3px; }
.tab.on { width: 130px; height: 50px; margin-bottom: -4px; background: #fff; position: relative; line-height: 44px; padding-right: 2px; }
.tab-page { flex: 1; background: #fff; border: 2px solid #828790; border-bottom-width: 1px; display: flex; padding: 5px 13px 8px 9px; gap: 7px; }
.list { border: 2px solid #828790; background: #fff; padding: 3px 3px 2px; display: flex; flex-direction: column; }
.left { width: 368px; } .wide { flex: 1; }
.lh { height: 33px; flex: none; display: flex; background: #fcfcfc; border-bottom: 2px solid #e2e2e2; border-left: 2px solid #e6e6e6; }
.lh > span { border-right: 2px solid #e2e2e2; border-top: 2px solid #ececec; padding-left: 10px; display: flex; flex: none; line-height: 30px; }
.lh > .c0 { width: 53px; } .lh > .c1 { width: 142px; padding-left: 11px; }
.lines { flex: 1; display: flex; background: repeating-linear-gradient(#fff 0 32px, #f0f0f0 32px 34px); padding-left: 2px; }
.lines span { border-right: 2px solid #f0f0f0; flex: none; }
.lot-status { margin-top: auto; height: 46px; border: 2px solid #a0a0a0; background: #fff; display: flex; justify-content: flex-end; align-items: flex-end; flex: none; }
</style>
